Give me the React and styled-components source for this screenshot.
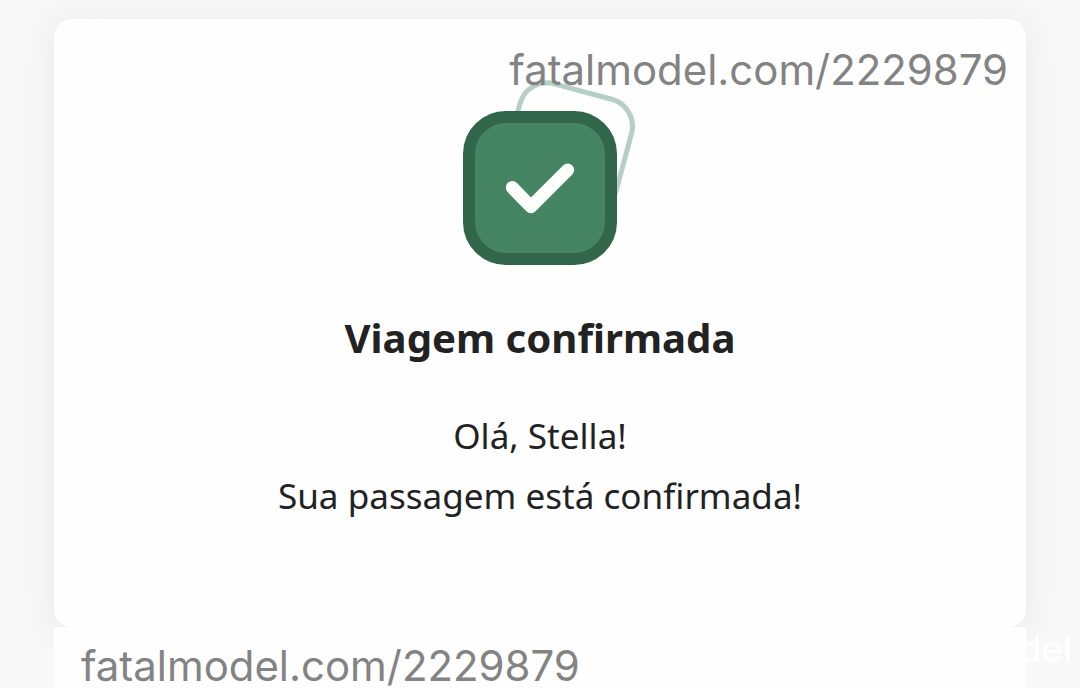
import React from 'react';
import styled, { createGlobalStyle } from 'styled-components';

const GlobalStyle = createGlobalStyle`
  * {
    box-sizing: border-box;
  }

  body {
    margin: 0;
    background: #f8f8f8;
    font-family: 'Noto Sans', sans-serif;
    color: #222;
  }
`;

const ConfirmIcon = () => (
  <svg width={180} height={190} viewBox="0 0 180 190" fill="none">
    <rect
      x={65.5}
      y={-19}
      width={115.5}
      height={115.5}
      rx={28}
      stroke="#b6cfc5"
      strokeWidth={5}
      transform="rotate(15)"
    />
    <rect x={10} y={39} width={142} height={142} rx={37} fill="#458462" stroke="#31664a" strokeWidth={12} />
    <path
      d="M53.3 109.5L72 128.7L108.7 92"
      stroke="#fdfffd"
      strokeWidth={13}
      strokeLinecap="round"
      strokeLinejoin="round"
    />
  </svg>
);

export default function App() {
  return (
    <>
      <GlobalStyle />
      <Page>
        <Card>
          <ConfirmIcon />
          <Title>Viagem confirmada</Title>
          <Message>
            Olá, Stella!
            <br />
            Sua passagem está confirmada!
          </Message>
          <CornerMark>fatalmodel.com/2229879</CornerMark>
        </Card>
        <NextCard>
          <Mark>fatalmodel.com/2229879</Mark>
        </NextCard>
        <SideMark>del</SideMark>
      </Page>
    </>
  );
}

const Page = styled.main`
  position: relative;
  height: 688px;
  padding: 19px 54px 0;
  overflow: hidden;
`;

const Card = styled.section`
  position: relative;
  display: flex;
  flex-direction: column;
  align-items: center;
  height: 608px;
  padding-top: 59px;
  border-radius: 18px;
  background: #fefefe;
  box-shadow: 0 4px 38px rgba(0, 0, 0, 0.07);

  svg {
    margin-left: 18px;
    flex-shrink: 0;
  }
`;

const NextCard = styled.section`
  position: relative;
  display: flex;
  align-items: flex-end;
  height: 61px;
  padding: 0 27px;
  background: #fefefe;
`;

const Title = styled.h1`
  margin: 42px 0 0;
  font-size: 40.15px;
  line-height: 56px;
  font-weight: 700;
`;

const Message = styled.p`
  margin: 39px 0 0;
  font-size: 35.1px;
  line-height: 60px;
  text-align: center;
`;

const Mark = styled.span`
  font-family: Inter, sans-serif;
  font-size: 41.9px;
  line-height: 44px;
  white-space: nowrap;
  color: #838383;
`;

const CornerMark = styled(Mark)`
  position: absolute;
  top: 29px;
  right: 18px;
`;

/* pale mark running off the card's right edge */
const SideMark = styled(Mark)`
  position: absolute;
  right: 8px;
  bottom: 17px;
  font-size: 37px;
  color: #fff;
`;
